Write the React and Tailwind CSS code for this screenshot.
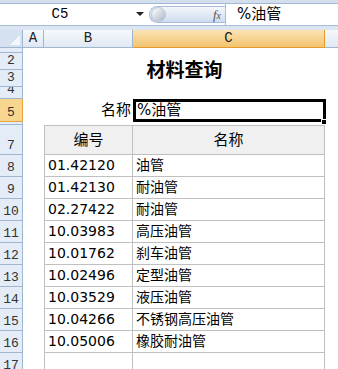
import React from 'react';

const rows = [
  ['01.42120', '油管'],
  ['01.42130', '耐油管'],
  ['02.27422', '耐油管'],
  ['10.03983', '高压油管'],
  ['10.01762', '刹车油管'],
  ['10.02496', '定型油管'],
  ['10.03529', '液压油管'],
  ['10.04266', '不锈钢高压油管'],
  ['10.05006', '橡胶耐油管'],
];

const mono = { fontFamily: '"Liberation Mono", "DejaVu Sans Mono", monospace' };
const body = { fontFamily: '"DejaVu Sans", "Noto Sans CJK SC", sans-serif' };

const RowHead = ({ label, h, active }) => (
  <div
    className={`w-[23px] shrink-0 flex items-end justify-center overflow-hidden border-r border-b text-[13px] leading-none text-[#333] ${
      active ? 'bg-[#f9d68f] border-[#e8a33a]' : 'bg-[#e4ecf7] border-[#9eb6ce]'
    } ${h}`}
    style={mono}
  >
    {label && <span className="mb-[2px]">{label}</span>}
  </div>
);

const App = () => {
  return (
    <div className="w-[338px] h-[369px] overflow-hidden bg-white text-black" style={body}>
      {/* Formula bar */}
      <div className="h-[30px] bg-[#dce6f3] flex flex-col">
        <div className="h-[4px] bg-[#d3dfef] border-b border-[#a3b8d4]" />
        <div className="h-[22px] flex items-stretch bg-white border-b border-[#a9bcd6]">
          <div className="w-[149px] flex items-center relative">
            <span className="w-[120px] text-center text-[14px]" style={mono}>C5</span>
            <span className="absolute left-[136px] top-[8px] w-0 h-0 border-l-[4px] border-r-[4px] border-t-[4px] border-l-transparent border-r-transparent border-t-[#222]" />
          </div>
          <div className="w-[76px] my-[2px] flex items-center rounded-l-full border border-r-0 border-[#a7bbd6] bg-gradient-to-b from-[#f4f7fc] to-[#cfdcee]">
            <span className="ml-[1px] w-[15px] h-[15px] rounded-full bg-gradient-to-br from-[#ffffff] to-[#aeb8c4] border border-[#b9c7d8]" />
            <span
              className="ml-auto mr-[4px] text-[13px] italic text-[#555]"
              style={{ fontFamily: '"Liberation Serif", serif' }}
            >
              f<span className="text-[10px]">x</span>
            </span>
          </div>
          <div className="flex-1 flex items-center border-l border-[#a9bcd6] pl-[11px] text-[15px]">
            %油管
          </div>
        </div>
      </div>

      {/* Column headers */}
      <div className="h-[18px] flex text-[14px] text-[#222]" style={mono}>
        <div className="w-[23px] relative border-r border-b border-[#9eb6ce] bg-[#d5e1f0]">
          <span className="absolute right-[2px] bottom-[2px] w-0 h-0" style={{ borderBottom: '10px solid #f4f8fc', borderLeft: '10px solid transparent' }} />
        </div>
        <div className="w-[21px] flex items-center justify-center border-r border-b border-[#9eb6ce] bg-gradient-to-b from-[#f6f9fc] to-[#e0e8f3]">A</div>
        <div className="w-[89px] flex items-center justify-center border-r border-b border-[#9eb6ce] bg-gradient-to-b from-[#f6f9fc] to-[#e0e8f3]">B</div>
        <div className="w-[192px] flex items-center justify-center border-r border-b border-[#e59a2f] bg-gradient-to-b from-[#fbe2b4] to-[#f3c46d]">C</div>
        <div className="flex-1 border-b border-[#9eb6ce] bg-gradient-to-b from-[#f6f9fc] to-[#e0e8f3]" />
      </div>

      {/* Row 1 */}
      <div className="flex">
        <RowHead label="1" h="h-[5px]" />
      </div>

      {/* Rows 2-3: title */}
      <div className="flex">
        <div className="flex flex-col">
          <RowHead label="2" h="h-[17px]" />
          <RowHead label="3" h="h-[17px]" />
        </div>
        <div className="w-[21px]" />
        <div className="w-[281px] flex items-center justify-center text-[19px] font-bold">
          材料查询
        </div>
      </div>

      {/* Row 4 */}
      <div className="flex">
        <RowHead label="4" h="h-[12px]" />
      </div>

      {/* Row 5: search */}
      <div className="flex h-[23px]">
        <RowHead label="5" h="h-[23px]" active />
        <div className="w-[21px]" />
        <div className="w-[89px] flex items-center justify-end pr-[2px] text-[15px]">名称</div>
        <div className="w-[192px] relative flex items-center pl-[4px] text-[15px]">
          %油管
          <div className="absolute left-0 top-0 right-[-1px] bottom-0 border-[3px] border-black" />
          <div className="absolute right-[-2px] bottom-[-3px] w-[6px] h-[6px] bg-black border border-white" />
        </div>
      </div>

      {/* Row 6 */}
      <div className="flex">
        <RowHead label="" h="h-[3px]" />
      </div>

      {/* Row 7: table header */}
      <div className="flex h-[30px]">
        <RowHead label="7" h="h-[30px]" />
        <div className="w-[21px]" />
        <div className="w-[89px] flex items-center justify-center bg-[#f0f0f0] border border-[#c0c0c0] text-[15px]">编号</div>
        <div className="w-[192px] flex items-center justify-center bg-[#f0f0f0] border-t border-r border-b border-[#c0c0c0] text-[15px]">名称</div>
      </div>

      {/* Data rows */}
      {rows.map(([code, name], i) => (
        <div key={code} className="flex h-[22px]">
          <RowHead label={String(i + 8)} h="h-[22px]" />
          <div className="w-[21px]" />
          <div className="w-[89px] flex items-center pl-[3px] border-l border-r border-b border-[#c0c0c0] text-[14px]">{code}</div>
          <div className="w-[192px] flex items-center pl-[3px] border-r border-b border-[#c0c0c0] text-[14px]">{name}</div>
        </div>
      ))}

      {/* Row 17 */}
      <div className="flex h-[22px]">
        <RowHead label="17" h="h-[22px]" />
        <div className="w-[21px]" />
        <div className="w-[89px] border-l border-r border-b border-[#c0c0c0]" />
        <div className="w-[192px] border-r border-b border-[#c0c0c0]" />
      </div>
    </div>
  );
};

export default App;
